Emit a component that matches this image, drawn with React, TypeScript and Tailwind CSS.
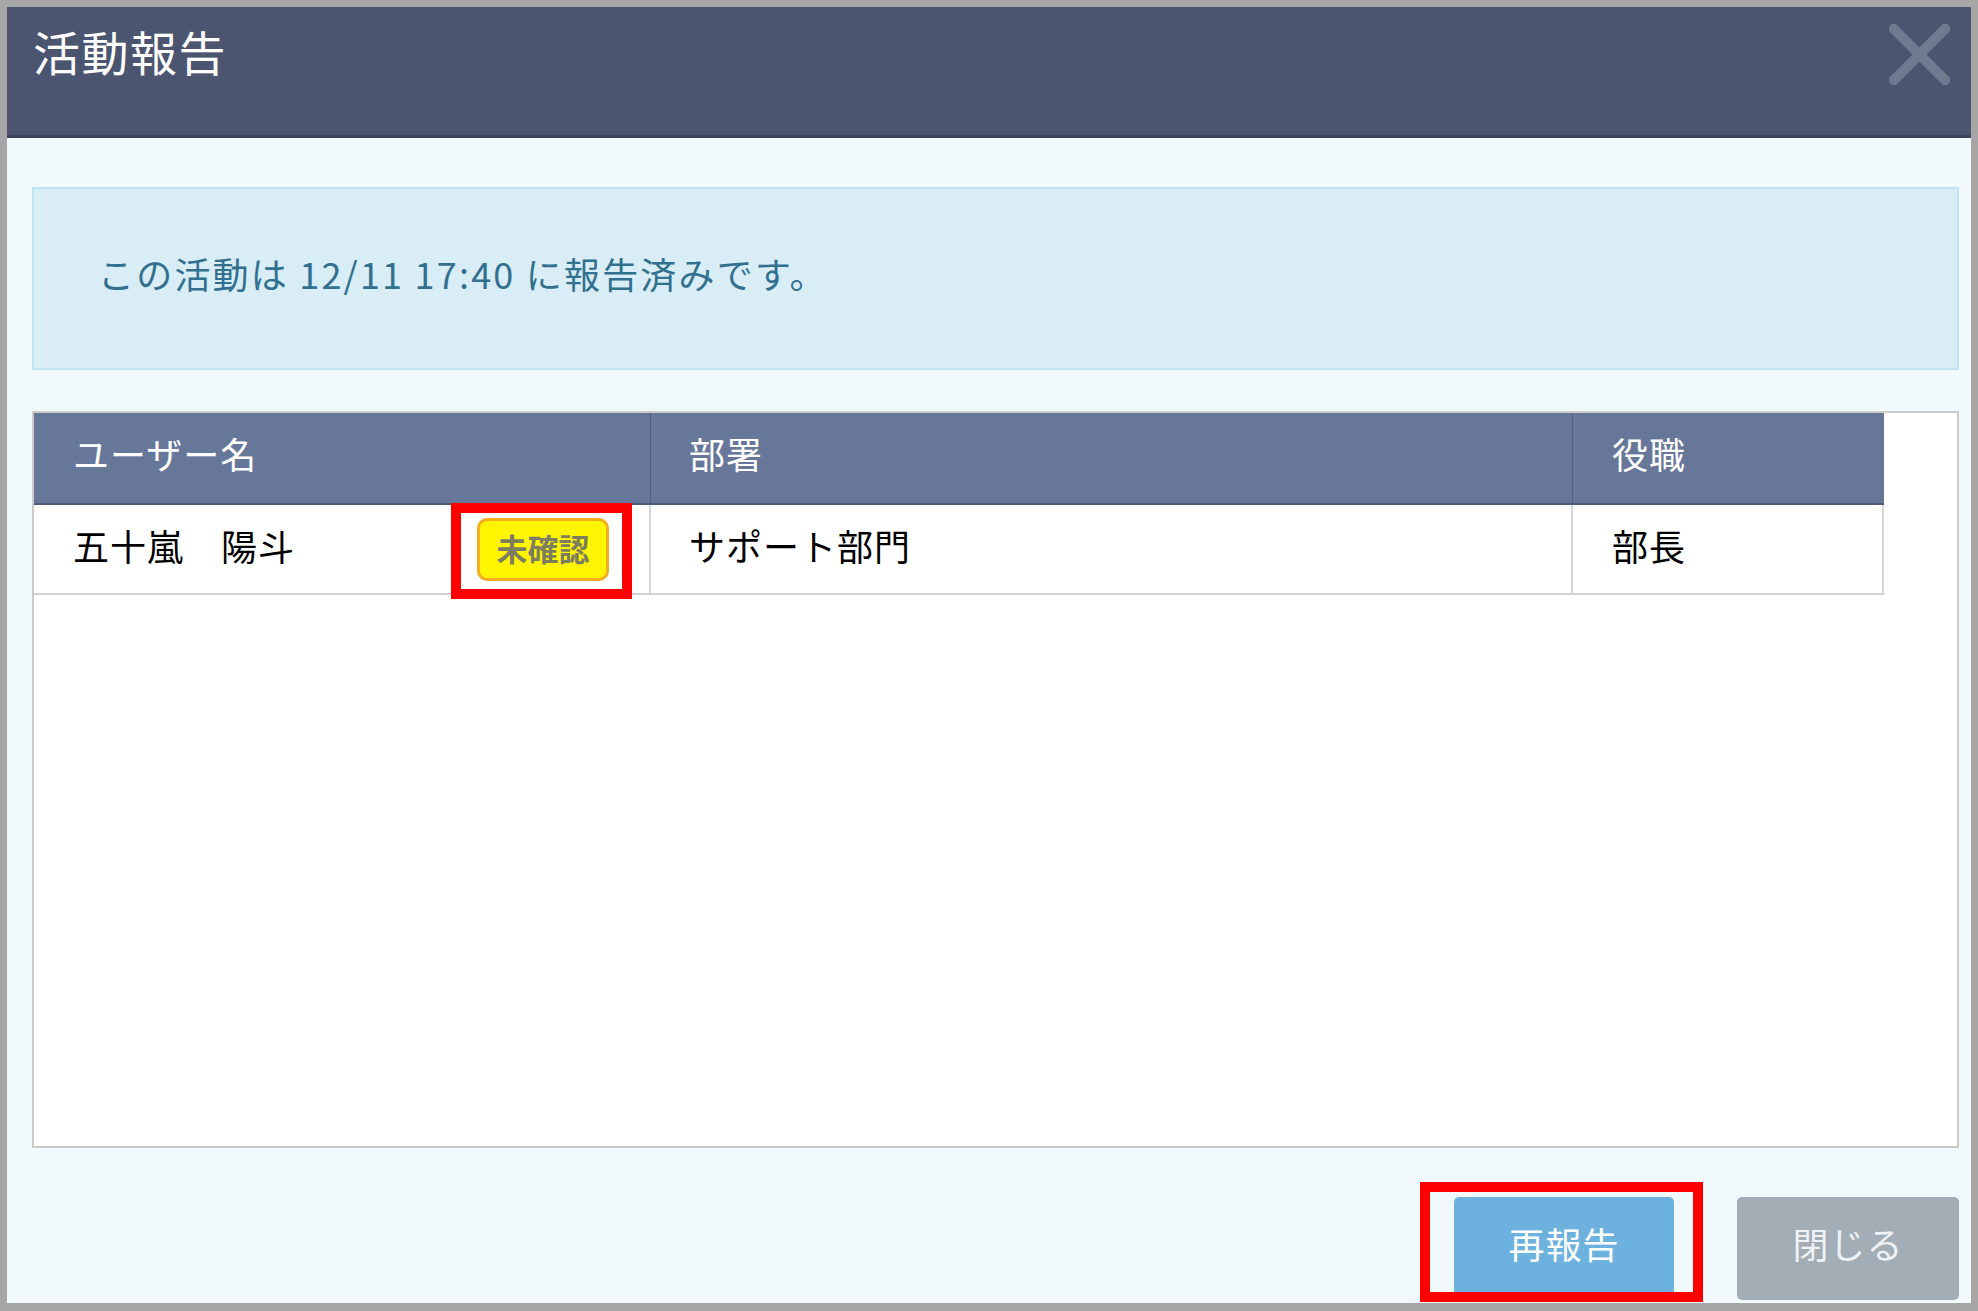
import React from 'react';

const font = { fontFamily: '"Noto Sans CJK JP", "Noto Sans", sans-serif' };

function CloseIcon() {
    return (
        <svg width="61" height="61" viewBox="0 0 61 61" className="mt-[17px]">
            <path d="M5 5 L56 56 M56 5 L5 56" stroke="#6f7a8e" strokeWidth="10" strokeLinecap="square" />
        </svg>
    );
}

function App() {
    return (
        <div
            className="w-[1978px] h-[1311px] flex flex-col border-[7px] border-b-[8px] border-[#a6a6a6] overflow-hidden"
            style={font}
        >
            {/* title bar */}
            <div className="h-[131px] shrink-0 flex justify-between items-start bg-[#4b5570] border-b-[3px] border-[#3d4559] pl-[26px] pr-[21px]">
                <h1 className="pt-[20px] text-[47px] leading-none text-white tracking-[1.5px]">活動報告</h1>
                <CloseIcon />
            </div>

            <div className="flex-1 flex flex-col bg-[#f2f9fd] pl-[25px] pr-[12px] pt-[49px]">
                {/* info alert */}
                <div className="h-[183px] shrink-0 flex items-center border-2 border-[#bfe6f0] bg-[#d9edf7] pl-[64px]">
                    <p className="text-[36px] leading-none text-[#31708f] tracking-[2.2px] pb-[12px]">
                        この活動は 12/11 17:40 に報告済みです。
                    </p>
                </div>

                {/* member table */}
                <div className="mt-[41px] h-[737px] shrink-0 border-2 border-[#cbcbcb] bg-white">
                    <div className="flex w-[1850px] h-[92px] bg-[#67779a] border-b-2 border-[#4e5a77] text-white text-[36px] leading-none tracking-[1px]">
                        <div className="w-[617px] flex items-center pl-[39px] pb-[10px] border-r border-[#52607d]">ユーザー名</div>
                        <div className="w-[922px] flex items-center pl-[38px] pb-[10px] border-r border-[#52607d]">部署</div>
                        <div className="w-[311px] flex items-center pl-[39px] pb-[10px]">役職</div>
                    </div>
                    <div className="flex w-[1850px] h-[90px] border-b-2 border-[#d2d2d2] text-black text-[36px] leading-none tracking-[1px]">
                        <div className="w-[617px] flex items-center justify-between pl-[39px] pr-[40px] border-r-2 border-[#d6d6d6]">
                            <span className="mb-[8px]">五十嵐　陽斗</span>
                            <span className="relative w-[132px] h-[63px] flex items-center justify-center rounded-[10px] border-[3px] border-[#f5ad1c] bg-[#fff500] text-[31px] font-bold tracking-normal text-[#7d7d60]">
                                <span className="mb-[4px]">未確認</span>
                                <span className="absolute -left-[29px] -right-[26px] -top-[18px] -bottom-[21px] border-[10px] border-[#ff0000]" />
                            </span>
                        </div>
                        <div className="w-[922px] flex items-center pl-[38px] border-r-2 border-[#d6d6d6]">
                            <span className="mb-[8px]">サポート部門</span>
                        </div>
                        <div className="w-[311px] flex items-center pl-[39px] border-r-2 border-[#d6d6d6]">
                            <span className="mb-[8px]">部長</span>
                        </div>
                    </div>
                </div>

                {/* footer buttons */}
                <div className="mt-[49px] flex justify-end gap-[63px]">
                    <button className="relative w-[220px] h-[103px] rounded-[5px] bg-[#6db1de] text-white text-[36px] leading-none tracking-[1px] pb-[12px]">
                        再報告
                        <span className="absolute -left-[34px] -right-[29px] -top-[15px] -bottom-[2px] border-[10px] border-[#ff0000]" />
                    </button>
                    <button className="w-[222px] h-[103px] rounded-[5px] bg-[#a2adb6] text-[#eef2f5] text-[36px] leading-none tracking-[1px] pb-[12px]">
                        閉じる
                    </button>
                </div>
            </div>
        </div>
    );
}

export default App;
